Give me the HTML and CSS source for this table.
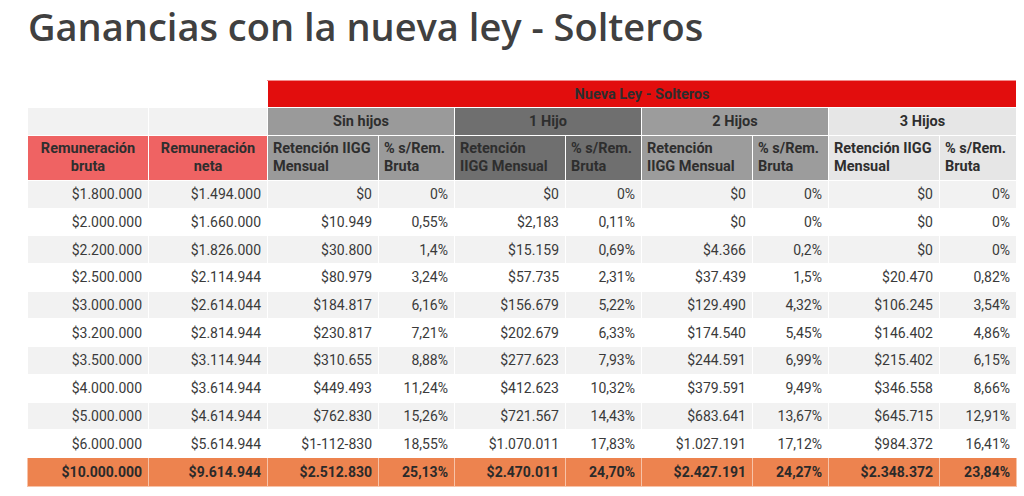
FILE: index.html
```html
<!DOCTYPE html>
<html lang="es">
<head>
<meta charset="utf-8">
<title>Ganancias con la nueva ley - Solteros</title>
<link rel="stylesheet" href="styles.css">
</head>
<body>
<div class="page">
  <h1 class="title">Ganancias con la nueva ley - Solteros</h1>
  <table class="grid">
    <colgroup>
      <col class="w-rem"><col class="w-rem2">
      <col class="w-ret"><col class="w-pct">
      <col class="w-ret"><col class="w-pct">
      <col class="w-ret"><col class="w-pct">
      <col class="w-ret"><col class="w-pct3">
    </colgroup>
    <thead>
      <tr class="r-top">
        <th class="blank"></th><th class="blank"></th>
        <th class="ley" colspan="8">Nueva Ley - Solteros</th>
      </tr>
      <tr class="r-group">
        <th class="empty"></th><th class="empty"></th>
        <th class="g0" colspan="2">Sin hijos</th>
        <th class="g1" colspan="2">1 Hijo</th>
        <th class="g2" colspan="2">2 Hijos</th>
        <th class="g3" colspan="2">3 Hijos</th>
      </tr>
      <tr class="r-head">
        <th class="rem">Remuneración<br>bruta</th>
        <th class="rem">Remuneración<br>neta</th>
        <th class="g0 sub">Retención IIGG<br>Mensual</th>
        <th class="g0 sub">%&nbsp;s/Rem.<br>Bruta</th>
        <th class="g1 sub">Retención<br>IIGG Mensual</th>
        <th class="g1 sub">%&nbsp;s/Rem.<br>Bruta</th>
        <th class="g2 sub">Retención<br>IIGG Mensual</th>
        <th class="g2 sub">%&nbsp;s/Rem.<br>Bruta</th>
        <th class="g3 sub">Retención IIGG<br>Mensual</th>
        <th class="g3 sub">%&nbsp;s/Rem.<br>Bruta</th>
      </tr>
    </thead>
    <tbody>
      <tr><td>$1.800.000</td><td>$1.494.000</td><td>$0</td><td>0%</td><td>$0</td><td>0%</td><td>$0</td><td>0%</td><td>$0</td><td>0%</td></tr>
      <tr><td>$2.000.000</td><td>$1.660.000</td><td>$10.949</td><td>0,55%</td><td>$2,183</td><td>0,11%</td><td>$0</td><td>0%</td><td>$0</td><td>0%</td></tr>
      <tr><td>$2.200.000</td><td>$1.826.000</td><td>$30.800</td><td>1,4%</td><td>$15.159</td><td>0,69%</td><td>$4.366</td><td>0,2%</td><td>$0</td><td>0%</td></tr>
      <tr><td>$2.500.000</td><td>$2.114.944</td><td>$80.979</td><td>3,24%</td><td>$57.735</td><td>2,31%</td><td>$37.439</td><td>1,5%</td><td>$20.470</td><td>0,82%</td></tr>
      <tr><td>$3.000.000</td><td>$2.614.044</td><td>$184.817</td><td>6,16%</td><td>$156.679</td><td>5,22%</td><td>$129.490</td><td>4,32%</td><td>$106.245</td><td>3,54%</td></tr>
      <tr><td>$3.200.000</td><td>$2.814.944</td><td>$230.817</td><td>7,21%</td><td>$202.679</td><td>6,33%</td><td>$174.540</td><td>5,45%</td><td>$146.402</td><td>4,86%</td></tr>
      <tr><td>$3.500.000</td><td>$3.114.944</td><td>$310.655</td><td>8,88%</td><td>$277.623</td><td>7,93%</td><td>$244.591</td><td>6,99%</td><td>$215.402</td><td>6,15%</td></tr>
      <tr><td>$4.000.000</td><td>$3.614.944</td><td>$449.493</td><td>11,24%</td><td>$412.623</td><td>10,32%</td><td>$379.591</td><td>9,49%</td><td>$346.558</td><td>8,66%</td></tr>
      <tr><td>$5.000.000</td><td>$4.614.944</td><td>$762.830</td><td>15,26%</td><td>$721.567</td><td>14,43%</td><td>$683.641</td><td>13,67%</td><td>$645.715</td><td>12,91%</td></tr>
      <tr><td>$6.000.000</td><td>$5.614.944</td><td>$1-112-830</td><td>18,55%</td><td>$1.070.011</td><td>17,83%</td><td>$1.027.191</td><td>17,12%</td><td>$984.372</td><td>16,41%</td></tr>
      <tr class="total"><td>$10.000.000</td><td>$9.614.944</td><td>$2.512.830</td><td>25,13%</td><td>$2.470.011</td><td>24,70%</td><td>$2.427.191</td><td>24,27%</td><td>$2.348.372</td><td>23,84%</td></tr>
    </tbody>
  </table>
</div>
</body>
</html>
```

FILE: styles.css
```css
* { box-sizing: border-box; }

html, body {
  margin: 0;
  padding: 0;
  background: #ffffff;
}

.page {
  width: 1024px;
  height: 496px;
  overflow: hidden;
}

.title {
  margin: 0 0 28px 0;
  padding-left: 28px;
  font-family: "Open Sans", "Liberation Sans", sans-serif;
  font-weight: 600;
  font-size: 38px;
  line-height: 52px;
  height: 52px;
  color: #404040;
  white-space: nowrap;
}

.grid {
  margin-left: 27px;
  border-collapse: collapse;
  table-layout: fixed;
  width: 990px;
  font-family: Roboto, "Liberation Sans", sans-serif;
  font-size: 14px;
  color: #333333;
}

.w-rem { width: 121px; }
.w-rem2 { width: 119px; }
.w-ret { width: 111px; }
.w-pct { width: 76px; }
.w-pct3 { width: 77px; }

.grid th,
.grid td {
  border: 1px solid #ffffff;
  padding: 0 6px;
}

.grid th {
  font-weight: 700;
  color: #2e2e2e;
}

.r-top { height: 27px; }
.r-top .blank { background: #ffffff; border: none; }
.r-top .ley {
  background: #e20d0d;
  text-align: center;
  font-size: 14.5px;
  border-top: 1px solid #f28c8c;
}

.r-group { height: 28px; }
.r-group th { text-align: center; font-size: 14.5px; }
.r-group .empty { background: #f2f2f2; }

.r-head { height: 45px; }
.r-head th { font-size: 14.5px; line-height: 18px; vertical-align: middle; }
.r-head .rem {
  background: #ef6363;
  text-align: center;
}
.r-head .sub { text-align: left; padding-left: 5px; padding-right: 2px; }

.g0 { background: #9a9a9a; }
.g1 { background: #6f6f6f; }
.g2 { background: #9c9c9c; }
.g3 { background: #e6e6e6; }

.grid tbody tr { height: 27.7px; }
.grid tbody td {
  text-align: right;
  white-space: nowrap;
  color: #3a3a3a;
}
.grid tbody tr:nth-child(odd) td { background: #f2f2f2; }
.grid tbody tr:nth-child(even) td { background: #ffffff; }

.grid tbody tr.total { height: 29px; }
.grid tbody tr.total td {
  background: #ed834f;
  font-weight: 700;
  color: #2a2a2a;
  border-color: #f7c3a8;
}
```
